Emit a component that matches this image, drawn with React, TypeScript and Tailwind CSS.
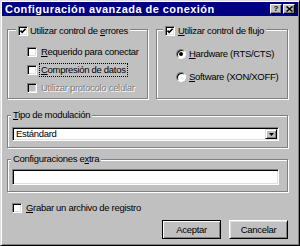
import React from 'react';

const Check: React.FC<{ checked?: boolean; disabled?: boolean }> = ({ checked, disabled }) => (
  <span
    className={`relative flex w-[10px] h-[10px] shrink-0 border border-t-[#808080] border-l-[#808080] border-r-white border-b-white shadow-[inset_1px_1px_0_#000,inset_-1px_-1px_0_#dfdfdf] ${
      disabled ? 'bg-[#c0c0c0]' : 'bg-white'
    }`}
  >
    {checked && (
      <svg viewBox="0 0 8 8" className="w-[8px] h-[8px]">
        <polyline points="1.5,3.6 3.2,5.4 6.6,1.8" fill="none" stroke="#000" strokeWidth="1.6" />
      </svg>
    )}
  </span>
);

const Radio: React.FC<{ checked?: boolean }> = ({ checked }) => (
  <span className="flex items-center justify-center w-[10px] h-[10px] shrink-0 rounded-full bg-white border border-t-[#808080] border-l-[#808080] border-r-white border-b-white shadow-[inset_1px_1px_0_#000]">
    {checked && <span className="w-[4px] h-[4px] rounded-full bg-black" />}
  </span>
);

const GroupBox: React.FC<{ label: React.ReactNode; labelClass: string; className?: string; children?: React.ReactNode }> = ({
  label,
  labelClass,
  className,
  children,
}) => (
  <div className={`relative border border-[#808080] shadow-[inset_1px_1px_0_#fff,1px_1px_0_#fff] ${className ?? ''}`}>
    <div className={`absolute flex items-center gap-[2px] bg-[#c0c0c0] px-[2px] h-[12px] leading-[12px] ${labelClass}`}>{label}</div>
    {children}
  </div>
);

const Row: React.FC<{ children: React.ReactNode; className?: string }> = ({ children, className }) => (
  <div className={`flex items-center h-[18px] gap-[2px] ${className ?? ''}`}>{children}</div>
);

export default function App() {
  return (
    <div className="w-[300px] h-[246px] bg-[#c0c0c0] border border-t-[#dfdfdf] border-l-[#dfdfdf] border-r-black border-b-black shadow-[inset_1px_1px_0_#fff,inset_-1px_-1px_0_#808080] p-[1px] font-['Liberation_Sans',Arial,sans-serif] text-black text-[9.5px] tracking-[-0.3px] leading-[12px] overflow-hidden">
      {/* Title bar */}
      <div className="flex items-center h-[14px] bg-[#000080] pl-[3px] pr-[3px]">
        <span className="flex-1 text-white text-[11px] font-bold tracking-[0.45px] leading-[14px] whitespace-nowrap">
          Configuración avanzada de conexión
        </span>
        <div className="flex gap-[1px]">
          <div className="flex items-center justify-center w-[12px] h-[10px] bg-[#c0c0c0] border border-t-white border-l-white border-r-black border-b-black shadow-[inset_-1px_-1px_0_#808080] text-[8px] font-bold leading-[8px] tracking-normal">
            ?
          </div>
          <div className="flex items-center justify-center w-[12px] h-[10px] bg-[#c0c0c0] border border-t-white border-l-white border-r-black border-b-black shadow-[inset_-1px_-1px_0_#808080]">
            <svg viewBox="0 0 7 6" className="w-[7px] h-[6px]">
              <path d="M0.5 0.5 L6.5 5.5 M6.5 0.5 L0.5 5.5" stroke="#000" strokeWidth="1.5" />
            </svg>
          </div>
        </div>
      </div>

      <div className="pl-[5px] pt-[13px] w-[286px]">
        {/* Top groups */}
        <div className="flex gap-[8px]">
          <GroupBox
            className="w-[141px] h-[70px] pt-[13px] pl-[19px]"
            labelClass="left-[8px] top-[-5px]"
            label={
              <>
                <Check checked />
                <span className="whitespace-nowrap">
                  Utilizar control de <u>e</u>rrores
                </span>
              </>
            }
          >
            <Row>
              <Check />
              <span className="border border-transparent px-[1px] whitespace-nowrap">
                <u>R</u>equerido para conectar
              </span>
            </Row>
            <Row>
              <Check />
              <span className="border border-dotted border-black px-[1px] whitespace-nowrap">
                <u>C</u>ompresión de datos
              </span>
            </Row>
            <Row>
              <Check disabled />
              <span className="border border-transparent px-[1px] whitespace-nowrap text-[#808080] [text-shadow:1px_1px_0_#fff]">
                Utilizar protocolo celular
              </span>
            </Row>
          </GroupBox>

          <GroupBox
            className="w-[132px] h-[70px] pt-[15px] pl-[19px] flex flex-col gap-[5px]"
            labelClass="left-[6px] top-[-5px]"
            label={
              <>
                <Check checked />
                <span className="whitespace-nowrap ml-[1px]">
                  <u>U</u>tilizar control de flujo
                </span>
              </>
            }
          >
            <Row className="gap-[3px]">
              <Radio checked />
              <span className="whitespace-nowrap">
                <u>H</u>ardware (RTS/CTS)
              </span>
            </Row>
            <Row className="gap-[3px]">
              <Radio />
              <span className="whitespace-nowrap">
                <u>S</u>oftware (XON/XOFF)
              </span>
            </Row>
          </GroupBox>
        </div>

        {/* Modulation */}
        <GroupBox
          className="mt-[16px] w-[281px] h-[33px] pt-[11px] pl-[4px]"
          labelClass="left-[3px] top-[-7px]"
          label={
            <span className="whitespace-nowrap">
              <u>T</u>ipo de modulación
            </span>
          }
        >
          <div className="flex w-[267px] h-[14px] bg-white border border-t-[#808080] border-l-[#808080] border-r-white border-b-white shadow-[inset_1px_1px_0_#000,inset_-1px_-1px_0_#dfdfdf] p-[1px]">
            <span className="flex-1 pl-[2px] leading-[10px]">Estándard</span>
            <div className="flex items-center justify-center w-[12px] h-[10px] bg-[#c0c0c0] border border-t-[#dfdfdf] border-l-[#dfdfdf] border-r-black border-b-black shadow-[inset_1px_1px_0_#fff,inset_-1px_-1px_0_#808080]">
              <svg viewBox="0 0 5 3" className="w-[5px] h-[3px]">
                <polygon points="0,0 5,0 2.5,3" fill="#000" />
              </svg>
            </div>
          </div>
        </GroupBox>

        {/* Extra config */}
        <GroupBox
          className="mt-[11px] w-[281px] h-[33px] pt-[9px] pl-[4px]"
          labelClass="left-[3px] top-[-7px]"
          label={
            <span className="whitespace-nowrap">
              Configuraciones e<u>x</u>tra
            </span>
          }
        >
          <div className="w-[267px] h-[16px] bg-white border border-t-[#808080] border-l-[#808080] border-r-white border-b-white shadow-[inset_1px_1px_0_#000,inset_-1px_-1px_0_#dfdfdf]" />
        </GroupBox>

        {/* Log file */}
        <div className="flex items-center gap-[4px] mt-[10px] pl-[5px] h-[12px]">
          <Check />
          <span className="whitespace-nowrap">
            <u>G</u>rabar un archivo de registro
          </span>
        </div>

        {/* Buttons */}
        <div className="flex justify-end gap-[8px] mt-[6px] w-[281px]">
          <button className="w-[59px] h-[19px] bg-[#c0c0c0] border border-black shadow-[inset_1px_1px_0_#fff,inset_-1px_-1px_0_#808080] text-[9.5px] leading-[12px]">
            Aceptar
          </button>
          <button className="w-[59px] h-[19px] bg-[#c0c0c0] border border-t-white border-l-white border-r-black border-b-black shadow-[inset_1px_1px_0_#dfdfdf,inset_-1px_-1px_0_#808080] text-[9.5px] leading-[12px]">
            Cancelar
          </button>
        </div>
      </div>
    </div>
  );
}
